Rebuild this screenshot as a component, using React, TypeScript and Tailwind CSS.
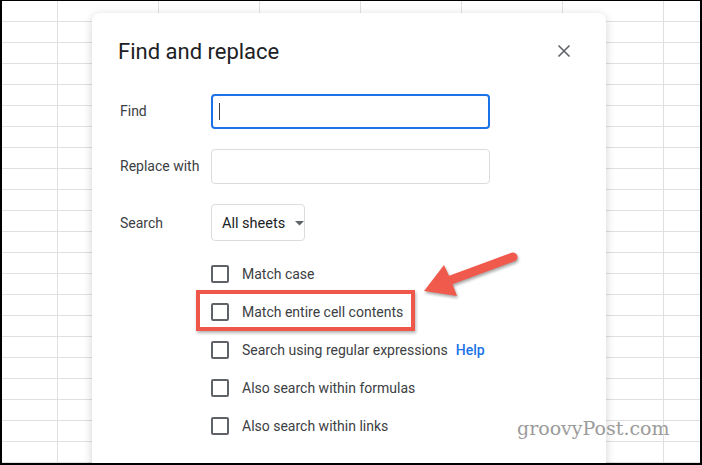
import React from "react";

const options = [
  "Match case",
  "Match entire cell contents",
  "Search using regular expressions",
  "Also search within formulas",
  "Also search within links",
];

export default function App() {
  return (
    <div className="relative w-[702px] h-[465px] overflow-hidden border-2 border-t border-black bg-white bg-[linear-gradient(to_right,#e0e0e0_1px,transparent_1px),linear-gradient(to_bottom,#e0e0e0_1px,transparent_1px)] bg-[size:101px_21px] bg-[position:55px_20px] font-['Roboto',sans-serif]">
      {/* dialog */}
      <div className="absolute left-[90px] top-[12px] w-[514px] h-[480px] bg-white rounded-lg shadow-[0_2px_10px_rgba(0,0,0,0.18)]">
        <div className="flex items-start justify-between pt-[25px] pl-[26px] pr-[30px]">
          <h1 className="text-[22px] leading-[28px] text-[#202124]">Find and replace</h1>
          <button className="w-[24px] h-[24px] mt-[1px] flex items-center justify-center text-[#5f6368]">
            <svg width="24" height="24" viewBox="0 0 24 24">
              <path d="M6.5 6.5 L17.5 17.5 M17.5 6.5 L6.5 17.5" stroke="currentColor" strokeWidth="1.6" fill="none" />
            </svg>
          </button>
        </div>

        <div className="pl-[28px] mt-[28px] grid grid-cols-[91px_279px] gap-y-[20px] items-center text-[14px] text-[#3c4043]">
          <label>Find</label>
          <div className="h-[35px] border-2 border-[#1a73e8] rounded-[4px] flex items-center pl-[6px]">
            <span className="w-[1px] h-[17px] bg-[#3c4043]" />
          </div>
          <label>Replace with</label>
          <div className="h-[35px] border border-[#dadce0] rounded-[4px]" />
          <label className="pt-[2px]">Search</label>
          <div>
            <button className="h-[37px] w-[94px] border border-[#dadce0] rounded-[4px] flex items-center pl-[10px] pt-[2px] text-[14.5px] text-[#202124] whitespace-nowrap">
              All sheets
              <svg width="9" height="5" viewBox="0 0 9 5" className="ml-[10px] shrink-0">
                <path d="M0 0 L9 0 L4.5 4.5 Z" fill="#5f6368" />
              </svg>
            </button>
          </div>
        </div>

        <div className="pl-[119px] mt-[14px] flex flex-col text-[14px] text-[#3c4043]">
          {options.map((o, i) => (
            <div key={o} className="h-[38px] flex items-center">
              <span className="w-[18px] h-[18px] border-2 border-[#5f6368] rounded-[2px]" />
              <span className="ml-[13px]">{o}</span>
              {i === 2 && <span className="ml-[8px] text-[#1a73e8] font-medium">Help</span>}
            </div>
          ))}
        </div>
      </div>

      {/* highlight box */}
      <div className="absolute left-[194px] top-[289px] w-[219px] h-[41px] border-4 border-[#f0574b] shadow-[1px_2px_3px_rgba(0,0,0,0.3)]" />

      {/* arrow */}
      <svg
        className="absolute left-[-2px] top-[-1px] drop-shadow-[1px_2px_1.5px_rgba(0,0,0,0.35)]"
        width="702"
        height="465"
        viewBox="0 0 702 465"
      >
        <line x1="513" y1="257" x2="448" y2="281" stroke="#f05a4c" strokeWidth="9" strokeLinecap="round" />
        <polygon points="424,291 444,265 451,280 457,296" fill="#f05a4c" />
      </svg>

      {/* watermark */}
      <div className="absolute left-[515px] top-[415px] font-['DejaVu_Serif',serif] text-[19px] leading-[24px] text-[#9b9b9b]">
        groovyPost.com
      </div>
    </div>
  );
}
